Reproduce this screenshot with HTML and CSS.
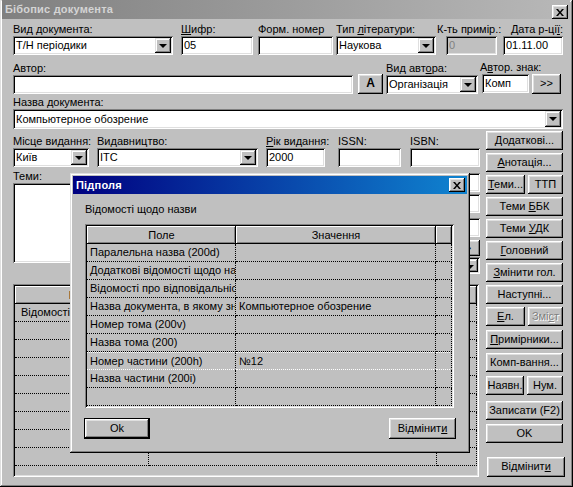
FILE: index.html
```html
<!DOCTYPE html>
<html lang="uk">
<head>
    <meta charset="UTF-8">
    <title>Бібопис документа</title>
    <link rel="stylesheet" href="styles.css">
</head>
<body>
<div class="window">
    <div class="titlebar inactive">
        <span class="title">Бібопис документа</span>
        <span class="close"><svg width="8" height="7" viewBox="0 0 8 7"><path d="M0 0h2l2 2.5L6 0h2L5 3.5 8 7H6L4 4.5 2 7H0l3-3.5z"/></svg></span>
    </div>

    <div class="form">
        <!-- рядок 1 -->
        <div class="row r1">
            <div class="grp" style="width:160px">
                <label>Вид документа:</label>
                <div class="field combo"><span class="val">Т/Н періодики</span><span class="drop"></span></div>
            </div>
            <div class="grp" style="width:72px;margin-left:8px">
                <label><u>Ш</u>ифр:</label>
                <div class="field">05</div>
            </div>
            <div class="grp" style="width:75px;margin-left:5px">
                <label>Форм. номер</label>
                <div class="field"></div>
            </div>
            <div class="grp" style="width:100px;margin-left:3px">
                <label>Тип <u>л</u>ітератури:</label>
                <div class="field combo"><span class="val">Наукова</span><span class="drop"></span></div>
            </div>
            <div class="grp" style="width:60px;margin-left:1px">
                <label>К-ть примір.:</label>
                <div class="field disabled" style="margin-left:9px">0</div>
            </div>
            <div class="grp" style="width:60px;margin-left:6px">
                <label class="right">Дата р-ці<u>ї</u>:</label>
                <div class="field">01.11.00</div>
            </div>
        </div>

        <!-- рядок 2 -->
        <div class="row r2">
            <div class="grp" style="width:340px">
                <label>Автор:</label>
                <div class="field"></div>
            </div>
            <div class="btn btn-a">A</div>
            <div class="grp" style="width:92px;margin-left:3px">
                <label>Вид авт<u>о</u>ра:</label>
                <div class="field combo"><span class="val">Організація</span><span class="drop"></span></div>
            </div>
            <div class="grp" style="width:81px;margin-left:2px">
                <label>А<u>в</u>тор. знак:</label>
                <div class="pair">
                    <div class="field" style="width:48px;margin-left:2px">Комп</div>
                    <div class="btn btn-more">&gt;&gt;</div>
                </div>
            </div>
        </div>

        <!-- рядок 3 -->
        <div class="row r3">
            <div class="grp" style="flex:1">
                <label>Назва документа:</label>
                <div class="field combo tall"><span class="val">Компьютерное обозрение</span><span class="drop"></span></div>
            </div>
        </div>

        <div class="lower">
            <div class="left">
                <div class="row r4">
                    <div class="grp" style="width:76px">
                        <label>Місце видання:</label>
                        <div class="field combo"><span class="val">Київ</span><span class="drop"></span></div>
                    </div>
                    <div class="grp" style="width:161px;margin-left:8px">
                        <label>Видавництво:</label>
                        <div class="field combo"><span class="val">ІТС</span><span class="drop"></span></div>
                    </div>
                    <div class="grp" style="width:59px;margin-left:8px">
                        <label><u>Р</u>ік видання:</label>
                        <div class="field">2000</div>
                    </div>
                    <div class="grp" style="width:63px;margin-left:13px">
                        <label>ISSN:</label>
                        <div class="field"></div>
                    </div>
                    <div class="grp" style="width:70px;margin-left:9px">
                        <label>ISBN:</label>
                        <div class="field"></div>
                    </div>
                </div>

                <div class="temy">
                    <div class="grp">
                        <label>Теми:</label>
                        <div class="field memo"></div>
                    </div>
                    <div class="side">
                        <div class="field"></div>
                        <div class="field" style="margin-top:2px"></div>
                        <div class="field" style="margin-top:5px"></div>
                        <div class="btn btn-small">&gt;</div>
                        <div class="field combo small"><span class="val"></span><span class="drop"></span></div>
                    </div>
                </div>

                <div class="grid back">
                    <div class="grow head">
                        <div class="hcell" style="width:134px">Поле</div>
                        <div class="hcell" style="width:288px">Значення</div>
                        <div class="hcell" style="flex:1"></div>
                    </div>
                    <div class="grow"><div class="cell" style="width:134px">Відомості щодо назви</div><div class="cell" style="width:288px"></div><div class="cell" style="flex:1"></div></div>
                    <div class="grow"><div class="cell" style="width:134px"></div><div class="cell" style="width:288px"></div><div class="cell" style="flex:1"></div></div>
                    <div class="grow"><div class="cell" style="width:134px"></div><div class="cell" style="width:288px"></div><div class="cell" style="flex:1"></div></div>
                    <div class="grow"><div class="cell" style="width:134px"></div><div class="cell" style="width:288px"></div><div class="cell" style="flex:1"></div></div>
                    <div class="grow"><div class="cell" style="width:134px"></div><div class="cell" style="width:288px"></div><div class="cell" style="flex:1"></div></div>
                    <div class="grow"><div class="cell" style="width:134px"></div><div class="cell" style="width:288px"></div><div class="cell" style="flex:1"></div></div>
                    <div class="grow"><div class="cell" style="width:134px"></div><div class="cell" style="width:288px"></div><div class="cell" style="flex:1"></div></div>
                    <div class="grow"><div class="cell" style="width:134px"></div><div class="cell" style="width:288px"></div><div class="cell" style="flex:1"></div></div>
                    <div class="grow"><div class="cell" style="width:134px"></div><div class="cell" style="width:288px"></div><div class="cell" style="flex:1"></div></div>
                </div>
            </div>

            <div class="buttons">
                <div class="btn"><u>Д</u>одаткові...</div>
                <div class="btn"><u>А</u>нотація...</div>
                <div class="pair gap">
                    <div class="btn" style="width:39px"><u>Т</u>еми...</div>
                    <div class="btn" style="flex:1">ТТП</div>
                </div>
                <div class="btn">Теми <u>Б</u>БК</div>
                <div class="btn">Теми <u>У</u>ДК</div>
                <div class="btn"><u>Г</u>оловний</div>
                <div class="btn"><u>З</u>мінити гол.</div>
                <div class="btn">Наступні...</div>
                <div class="pair gap">
                    <div class="btn" style="width:39px"><u>Е</u>л.</div>
                    <div class="btn off" style="flex:1">Змі<u>с</u>т</div>
                </div>
                <div class="btn mt4"><u>П</u>римірники...</div>
                <div class="btn mt4">Комп-вання...</div>
                <div class="pair gap mt4">
                    <div class="btn" style="width:38px">Наявн.</div>
                    <div class="btn" style="flex:1">Нум.</div>
                </div>
                <div class="btn mt6">Записати (F2)</div>
                <div class="btn mt4">OK</div>
                <div class="btn cancel">Відмінит<u>и</u></div>
            </div>
        </div>
    </div>

    <!-- діалог Підполя -->
    <div class="dialog">
        <div class="titlebar active">
            <span class="title">Підполя</span>
            <span class="close"><svg width="8" height="7" viewBox="0 0 8 7"><path d="M0 0h2l2 2.5L6 0h2L5 3.5 8 7H6L4 4.5 2 7H0l3-3.5z"/></svg></span>
        </div>
        <div class="dlg-body">
            <div class="caption">Відомості щодо назви</div>
            <div class="grid front">
                <div class="grow head">
                    <div class="hcell" style="width:149px">Поле</div>
                    <div class="hcell" style="width:200px">Значення</div>
                    <div class="hcell" style="flex:1"></div>
                </div>
                <div class="grow"><div class="cell c1">Паралельна назва (200d)</div><div class="cell c2"></div><div class="cell c3"></div></div>
                <div class="grow"><div class="cell c1">Додаткові відомості щодо назви</div><div class="cell c2"></div><div class="cell c3"></div></div>
                <div class="grow"><div class="cell c1">Відомості про відповідальність</div><div class="cell c2"></div><div class="cell c3"></div></div>
                <div class="grow"><div class="cell c1">Назва документа, в якому знаходиться</div><div class="cell c2">Компьютерное обозрение</div><div class="cell c3"></div></div>
                <div class="grow"><div class="cell c1">Номер тома (200v)</div><div class="cell c2"></div><div class="cell c3"></div></div>
                <div class="grow"><div class="cell c1">Назва тома (200)</div><div class="cell c2"></div><div class="cell c3"></div></div>
                <div class="grow sel"><div class="cell c1">Номер частини (200h)</div><div class="cell c2">№12</div><div class="cell c3"></div></div>
                <div class="grow"><div class="cell c1">Назва частини (200i)</div><div class="cell c2"></div><div class="cell c3"></div></div>
                <div class="grow"><div class="cell c1"></div><div class="cell c2"></div><div class="cell c3"></div></div>
            </div>
            <div class="dlg-buttons">
                <div class="btn default">Ok</div>
                <div class="btn dlg-cancel">Відмінит<u>и</u></div>
            </div>
        </div>
    </div>
</div>
</body>
</html>
```

FILE: styles.css
```css
* {
    box-sizing: border-box;
}
body {
    margin: 0;
    background-color: #c0c0c0;
    font-family: "Liberation Sans", Arial, sans-serif;
    font-size: 11px;
    color: #000;
}
u {
    text-decoration: underline;
    text-underline-offset: 1px;
}

/* рамки в стилі Windows 98 */
.window, .dialog {
    background-color: #c0c0c0;
    box-shadow: inset -1px -1px #000, inset 1px 1px #dfdfdf, inset -2px -2px #808080, inset 2px 2px #fff;
}
.window {
    position: relative;
    width: 573px;
    height: 487px;
    padding: 0 3px 3px 2px;
    overflow: hidden;
}
.titlebar {
    display: flex;
    align-items: flex-start;
    height: 19px;
    padding: 2px 2px 0 3px;
}
.titlebar .title {
    font-weight: bold;
    line-height: 14px;
    letter-spacing: 0.2px;
}
.titlebar.inactive {
    background: linear-gradient(90deg, #808080, #b8b8b8);
    color: #d4d4d4;
}
.titlebar.active {
    background: linear-gradient(90deg, #000080, #1084d0);
    color: #fff;
}
.close {
    margin-left: auto;
    margin-top: 3px;
    width: 16px;
    height: 14px;
    display: flex;
    align-items: center;
    justify-content: center;
    background-color: #c0c0c0;
    box-shadow: inset -1px -1px #000, inset 1px 1px #fff, inset -2px -2px #808080, inset 2px 2px #dfdfdf;
}

.form {
    padding: 4px 7px 0 11px;
}
.row {
    display: flex;
    align-items: flex-end;
}
.r2 { margin-top: 6px; }
.r3 { margin-top: 2px; }
.grp {
    display: flex;
    flex-direction: column;
}
.grp label {
    height: 13px;
    line-height: 13px;
    white-space: nowrap;
}
.grp label.right {
    text-align: right;
}

.field {
    height: 19px;
    line-height: 19px;
    padding: 0 3px;
    background-color: #fff;
    white-space: nowrap;
    overflow: hidden;
    box-shadow: inset 1px 1px #808080, inset -1px -1px #fff, inset 2px 2px #000, inset -2px -2px #dfdfdf;
}
.field.disabled {
    background-color: #c0c0c0;
    color: #808080;
}
.field.tall {
    height: 20px;
}
.combo {
    display: flex;
    align-items: center;
    padding-right: 2px;
}
.combo .val {
    flex: 1;
}
.drop {
    position: relative;
    width: 16px;
    height: 15px;
    background-color: #c0c0c0;
    box-shadow: inset -1px -1px #000, inset 1px 1px #dfdfdf, inset -2px -2px #808080, inset 2px 2px #fff;
}
.drop::after {
    content: "";
    position: absolute;
    left: 4px;
    top: 6px;
    border-left: 4px solid transparent;
    border-right: 4px solid transparent;
    border-top: 4px solid #000;
}
.tall .drop {
    height: 16px;
}

.btn {
    height: 19px;
    line-height: 19px;
    text-align: center;
    white-space: nowrap;
    background-color: #c0c0c0;
    box-shadow: inset -1px -1px #000, inset 1px 1px #fff, inset -2px -2px #808080, inset 2px 2px #dfdfdf;
}
.btn.off {
    color: #808080;
    text-shadow: 1px 1px #fff;
}
.btn-a {
    width: 25px;
    height: 20px;
    margin-left: 5px;
    font-weight: bold;
    font-size: 12px;
}
.btn-more {
    width: 30px;
    height: 20px;
    margin-left: 3px;
}
.pair {
    display: flex;
}
.pair.gap {
    gap: 3px;
}

.lower {
    display: flex;
    margin-top: 2px;
}
.left {
    width: 467px;
    padding-top: 4px;
}
.temy {
    display: flex;
    margin-top: 3px;
}
.memo {
    width: 180px;
    height: 80px;
}
.side {
    margin-left: auto;
    width: 94px;
    padding-top: 3px;
    display: flex;
    flex-direction: column;
}
.btn-small {
    align-self: flex-end;
    width: 24px;
    height: 16px;
    line-height: 16px;
    margin-top: 3px;
}
.field.small {
    height: 17px;
    margin-top: 1px;
}
.field.small .drop {
    height: 13px;
}

/* таблиці */
.grid {
    background-color: #c0c0c0;
    padding: 2px;
    box-shadow: inset 1px 1px #808080, inset -1px -1px #fff, inset 2px 2px #000, inset -2px -2px #dfdfdf;
    overflow: hidden;
}
.grid.back {
    margin-top: 10px;
    width: 466px;
    height: 193px;
}
.grow {
    display: flex;
    height: 18px;
}
.hcell {
    height: 18px;
    line-height: 18px;
    text-align: center;
    box-shadow: inset -1px -1px #000, inset 1px 1px #fff, inset -2px -2px #808080;
}
.cell {
    height: 18px;
    line-height: 17px;
    padding-left: 3px;
    white-space: nowrap;
    overflow: hidden;
    border-right: 1px dotted #000;
    border-bottom: 1px dotted #000;
}
.back .cell {
    padding-left: 6px;
}
.sel .cell {
    border-top: 1px dotted #fff;
    border-bottom: 1px dotted #fff;
    line-height: 16px;
}
.c1 { width: 149px; }
.c2 { width: 200px; }
.c3 { flex: 1; }

.buttons {
    width: 77px;
    margin-left: 6px;
    display: flex;
    flex-direction: column;
    gap: 3px;
}
.buttons .mt4 { margin-top: 1px; }
.buttons .mt6 { margin-top: 3px; }
.buttons .cancel {
    margin-top: 11px;
    margin-left: 1px;
    height: 20px;
    width: 78px;
}

/* діалог поверх форми */
.dialog {
    position: absolute;
    left: 70px;
    top: 173px;
    width: 400px;
    height: 280px;
    padding: 3px;
}
.dialog .titlebar {
    height: 18px;
    padding-top: 2px;
}
.dialog .close {
    margin-top: 0;
}
.dlg-body {
    padding: 9px 11px 0 12px;
}
.caption {
    line-height: 13px;
}
.grid.front {
    margin-top: 8px;
    width: 369px;
    height: 184px;
}
.dlg-buttons {
    display: flex;
    justify-content: space-between;
    margin-top: 10px;
}
.btn.default {
    width: 66px;
    height: 21px;
    line-height: 19px;
    margin-left: -1px;
    border: 1px solid #000;
}
.dlg-cancel {
    width: 67px;
    height: 21px;
    line-height: 21px;
}
```
